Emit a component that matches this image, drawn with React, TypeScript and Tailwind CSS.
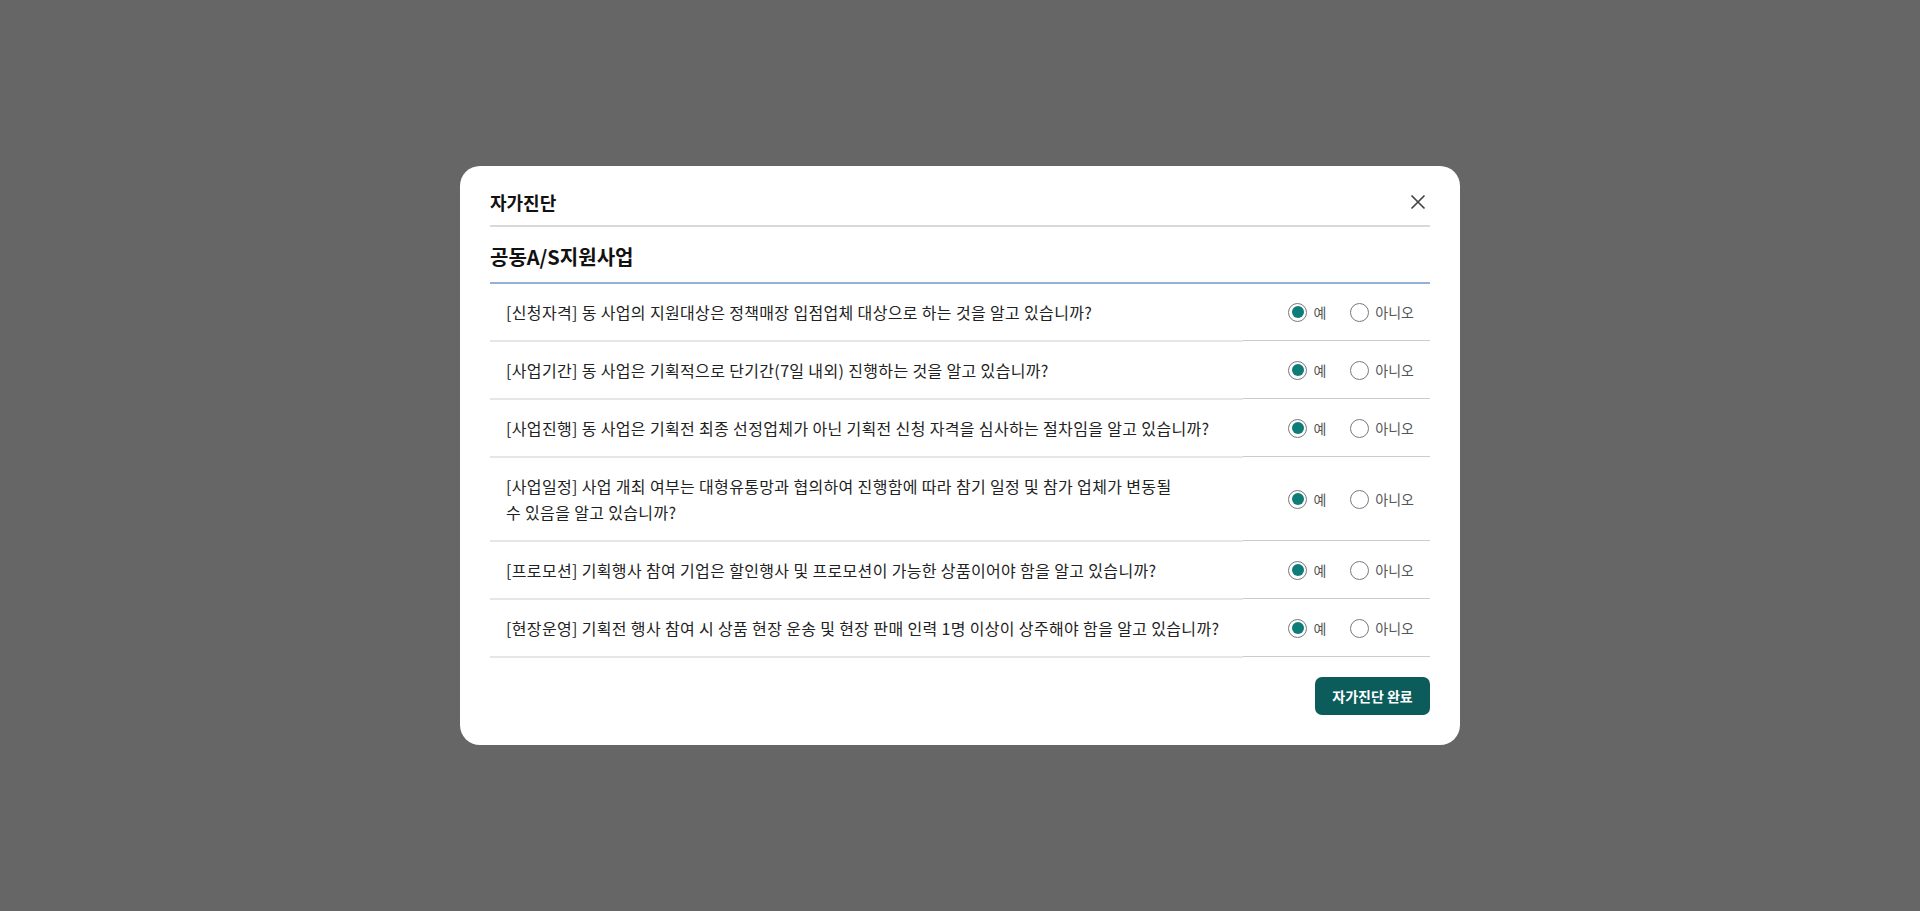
import { type FC } from "react";

const questions: { text: string; lines?: string[] }[] = [
  { text: "[신청자격] 동 사업의 지원대상은 정책매장 입점업체 대상으로 하는 것을 알고 있습니까?" },
  { text: "[사업기간] 동 사업은 기획적으로 단기간(7일 내외) 진행하는 것을 알고 있습니까?" },
  { text: "[사업진행] 동 사업은 기획전 최종 선정업체가 아닌 기획전 신청 자격을 심사하는 절차임을 알고 있습니까?" },
  {
    text: "",
    lines: [
      "[사업일정] 사업 개최 여부는 대형유통망과 협의하여 진행함에 따라 참기 일정 및 참가 업체가 변동될",
      "수 있음을 알고 있습니까?",
    ],
  },
  { text: "[프로모션] 기획행사 참여 기업은 할인행사 및 프로모션이 가능한 상품이어야 함을 알고 있습니까?" },
  { text: "[현장운영] 기획전 행사 참여 시 상품 현장 운송 및 현장 판매 인력 1명 이상이 상주해야 함을 알고 있습니까?" },
];

const Radio: FC<{ checked?: boolean; label: string }> = ({ checked, label }) => (
  <label className="flex items-center gap-[6px] cursor-pointer">
    <span className="w-[19px] h-[19px] rounded-full border border-[#7a7a7a] bg-white flex items-center justify-center">
      {checked && <span className="w-[12px] h-[12px] rounded-full bg-[#0e7d78]" />}
    </span>
    <span className="text-[14px] text-[#555] leading-[20px]">{label}</span>
  </label>
);

const App: FC = () => {
  return (
    <div
      className="w-full h-[911px] bg-[#666666] flex items-center justify-center"
      style={{ fontFamily: '"Noto Sans CJK KR", "Noto Sans", sans-serif' }}
    >
      <div className="w-[1000px] bg-white rounded-[20px] px-[30px] pt-[23px] pb-[30px] flex flex-col">
        <div className="flex items-center justify-between pb-[10px] border-b-2 border-[#d9d9d9]">
          <h1 className="text-[18px] leading-[26px] font-bold text-[#111]">자가진단</h1>
          <button className="w-[24px] h-[24px] flex items-center justify-center text-[#444]">
            <svg width="16" height="16" viewBox="0 0 16 16" fill="none" stroke="currentColor" strokeWidth="1.7">
              <path d="M1.5 1.5L14.5 14.5M14.5 1.5L1.5 14.5" />
            </svg>
          </button>
        </div>

        <h2 className="pt-[17px] pb-[12px] text-[20px] leading-[26px] font-bold text-[#111] border-b-2 border-[#93b2d5]">
          공동A/S지원사업
        </h2>

        <div className="flex flex-col">
          {questions.map((q, i) => (
            <div key={i} className="flex">
              <div className="flex-1 border-b-2 border-[#e6e6e6] px-[16px] py-[15px] text-[16px] tracking-[0.35px] leading-[26px] text-[#222]">
                {q.lines ? (
                  <>
                    {q.lines[0]}
                    <br />
                    {q.lines[1]}
                  </>
                ) : (
                  q.text
                )}
              </div>
              <div className="w-[187px] flex items-center justify-end gap-[24px] pr-[16px] border-b border-[#cccccc] mb-[1px]">
                <Radio checked label="예" />
                <Radio label="아니오" />
              </div>
            </div>
          ))}
        </div>

        <div className="flex justify-end mt-[19px]">
          <button className="w-[115px] h-[38px] rounded-[7px] bg-[#0b5c5b] text-white text-[14px] font-bold">
            자가진단 완료
          </button>
        </div>
      </div>
    </div>
  );
};

export default App;
